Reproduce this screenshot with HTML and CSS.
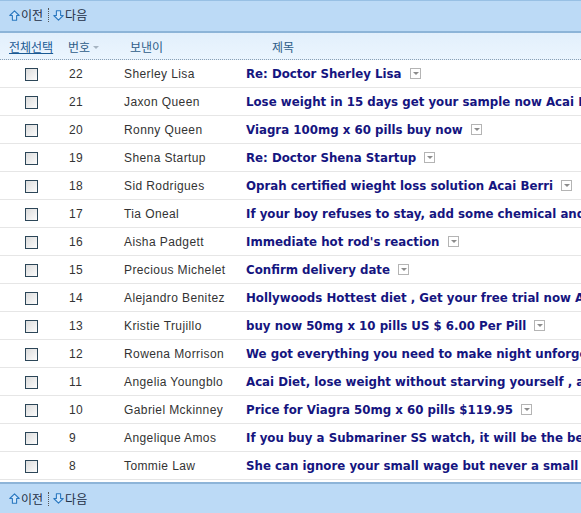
FILE: index.html
```html
<!DOCTYPE html>
<html lang="ko">
<head>
<meta charset="utf-8">
<link rel="stylesheet" href="styles.css">
</head>
<body>
<div class="mail">
  <div class="toolbar top">
    <span class="btn"><svg class="arr" viewBox="0 0 11 11"><path d="M5.5 0.8 L10.2 5.5 L7.6 5.5 L7.6 10.2 L3.4 10.2 L3.4 5.5 L0.8 5.5 Z" fill="#cfe6fb" stroke="#2a78c0" stroke-width="1.1" stroke-linejoin="round"/></svg>이전</span>
    <span class="sep"></span>
    <span class="btn"><svg class="arr" viewBox="0 0 11 11"><path d="M5.5 10.2 L10.2 5.5 L7.6 5.5 L7.6 0.8 L3.4 0.8 L3.4 5.5 L0.8 5.5 Z" fill="#cfe6fb" stroke="#2a78c0" stroke-width="1.1" stroke-linejoin="round"/></svg>다음</span>
  </div>
  <div class="head">
    <span class="h1"><a class="all">전체선택</a></span>
    <span class="h2">번호<span class="tri"></span></span>
    <span class="h3">보낸이</span>
    <span class="h4">제목</span>
  </div>
  <div class="list">
    <div class="row"><span class="c1"><span class="cb"></span></span><span class="c2">22</span><span class="c3">Sherley Lisa</span><span class="c4">Re: Doctor Sherley Lisa<span class="dd"></span></span></div>
    <div class="row"><span class="c1"><span class="cb"></span></span><span class="c2">21</span><span class="c3">Jaxon Queen</span><span class="c4">Lose weight in 15 days get your sample now Acai Berri</span></div>
    <div class="row"><span class="c1"><span class="cb"></span></span><span class="c2">20</span><span class="c3">Ronny Queen</span><span class="c4">Viagra 100mg x 60 pills buy now<span class="dd"></span></span></div>
    <div class="row"><span class="c1"><span class="cb"></span></span><span class="c2">19</span><span class="c3">Shena Startup</span><span class="c4">Re: Doctor Shena Startup<span class="dd"></span></span></div>
    <div class="row"><span class="c1"><span class="cb"></span></span><span class="c2">18</span><span class="c3">Sid Rodrigues</span><span class="c4">Oprah certified wieght loss solution Acai Berri<span class="dd"></span></span></div>
    <div class="row"><span class="c1"><span class="cb"></span></span><span class="c2">17</span><span class="c3">Tia Oneal</span><span class="c4">If your boy refuses to stay, add some chemical and make it stay</span></div>
    <div class="row"><span class="c1"><span class="cb"></span></span><span class="c2">16</span><span class="c3">Aisha Padgett</span><span class="c4">Immediate hot rod's reaction<span class="dd"></span></span></div>
    <div class="row"><span class="c1"><span class="cb"></span></span><span class="c2">15</span><span class="c3">Precious Michelet</span><span class="c4">Confirm delivery date<span class="dd"></span></span></div>
    <div class="row"><span class="c1"><span class="cb"></span></span><span class="c2">14</span><span class="c3">Alejandro Benitez</span><span class="c4">Hollywoods Hottest diet , Get your free trial now Acai</span></div>
    <div class="row"><span class="c1"><span class="cb"></span></span><span class="c2">13</span><span class="c3">Kristie Trujillo</span><span class="c4">buy now 50mg x 10 pills US $ 6.00 Per Pill<span class="dd"></span></span></div>
    <div class="row"><span class="c1"><span class="cb"></span></span><span class="c2">12</span><span class="c3">Rowena Morrison</span><span class="c4">We got everything you need to make night unforgettable</span></div>
    <div class="row"><span class="c1"><span class="cb"></span></span><span class="c2">11</span><span class="c3">Angelia Youngblo</span><span class="c4">Acai Diet, lose weight without starving yourself , and more</span></div>
    <div class="row"><span class="c1"><span class="cb"></span></span><span class="c2">10</span><span class="c3">Gabriel Mckinney</span><span class="c4">Price for Viagra 50mg x 60 pills $119.95<span class="dd"></span></span></div>
    <div class="row"><span class="c1"><span class="cb"></span></span><span class="c2">9</span><span class="c3">Angelique Amos</span><span class="c4">If you buy a Submariner SS watch, it will be the best choice</span></div>
    <div class="row"><span class="c1"><span class="cb"></span></span><span class="c2">8</span><span class="c3">Tommie Law</span><span class="c4">She can ignore your small wage but never a small tool</span></div>
  </div>
  <div class="toolbar bottom">
    <span class="btn"><svg class="arr" viewBox="0 0 11 11"><path d="M5.5 0.8 L10.2 5.5 L7.6 5.5 L7.6 10.2 L3.4 10.2 L3.4 5.5 L0.8 5.5 Z" fill="#cfe6fb" stroke="#2a78c0" stroke-width="1.1" stroke-linejoin="round"/></svg>이전</span>
    <span class="sep"></span>
    <span class="btn"><svg class="arr" viewBox="0 0 11 11"><path d="M5.5 10.2 L10.2 5.5 L7.6 5.5 L7.6 0.8 L3.4 0.8 L3.4 5.5 L0.8 5.5 Z" fill="#cfe6fb" stroke="#2a78c0" stroke-width="1.1" stroke-linejoin="round"/></svg>다음</span>
  </div>
</div>
</body>
</html>
```
FILE: styles.css
```css
html, body {
  margin: 0;
  padding: 0;
  background: #fff;
  overflow: hidden;
}
body {
  font-family: "Noto Sans CJK KR", "Liberation Sans", sans-serif;
  font-size: 12px;
  color: #333;
  width: 581px;
  height: 513px;
}
.mail {
  width: 581px;
  overflow: hidden;
}
.toolbar {
  background: #bcdaf6;
  display: flex;
  align-items: center;
  padding-left: 9px;
  box-sizing: border-box;
  color: #1e2e44;
}
.toolbar.top {
  border-top: 1px solid #98c0e4;
  border-bottom: 2px solid #8db4d8;
  height: 33px;
  padding-bottom: 2px;
}
.toolbar.bottom {
  border-top: 2px solid #8db4d8;
  height: 31px;
  margin-top: 2px;
}
.btn {
  display: flex;
  align-items: center;
  line-height: 14px;
}
.arr {
  width: 11px;
  height: 11px;
  margin-right: 1px;
}
.sep {
  width: 0;
  height: 14px;
  border-left: 1px dotted #555;
  margin: 0 4px 0 5px;
}
.head {
  display: grid;
  grid-template-columns: 62px 55px 122px 1fr;
  height: 26px;
  align-items: center;
  background: linear-gradient(#e2effc, #ebf5fe);
  border-bottom: 1px dotted #8aa0b4;
  color: #2d5c88;
}
.h1 { padding-left: 9px; }
.all { color: #1a5a94; text-decoration: underline; }
.h2 { padding-left: 6px; display: flex; align-items: center; }
.h3 { padding-left: 13px; }
.h4 { padding-left: 33px; }
.tri {
  width: 0;
  height: 0;
  border-left: 3px solid transparent;
  border-right: 3px solid transparent;
  border-top: 3px solid #a6b4c2;
  margin-left: 3px;
  margin-top: 2px;
}
.row {
  display: grid;
  grid-template-columns: 62px 55px 122px 1fr;
  height: 28px;
  box-sizing: border-box;
  border-bottom: 1px solid #e6e6e6;
  align-items: center;
  white-space: nowrap;
}
.c1 { padding-left: 25px; display: flex; align-items: center; padding-top: 1px; }
.c2, .c3 {
  padding-left: 7px;
  overflow: hidden;
  font-family: "Liberation Sans", sans-serif;
  letter-spacing: 0.4px;
}
.c4 {
  padding-left: 7px;
  font-family: "DejaVu Sans", sans-serif;
  font-weight: bold;
  font-size: 11.8px;
  color: #151580;
  overflow: hidden;
  display: flex;
  align-items: center;
}
.cb {
  width: 11px;
  height: 11px;
  border: 1px solid #2c4658;
  background: linear-gradient(135deg, #dcdcdc, #fcfcfc);
}
.dd {
  width: 9px;
  height: 9px;
  border: 1px solid #b4b4b4;
  margin-left: 8px;
  position: relative;
  flex: none;
  background: #fff;
}
.dd::after {
  content: "";
  position: absolute;
  left: 2px;
  top: 3px;
  border-left: 3px solid transparent;
  border-right: 3px solid transparent;
  border-top: 3px solid #8c8c8c;
}
```
